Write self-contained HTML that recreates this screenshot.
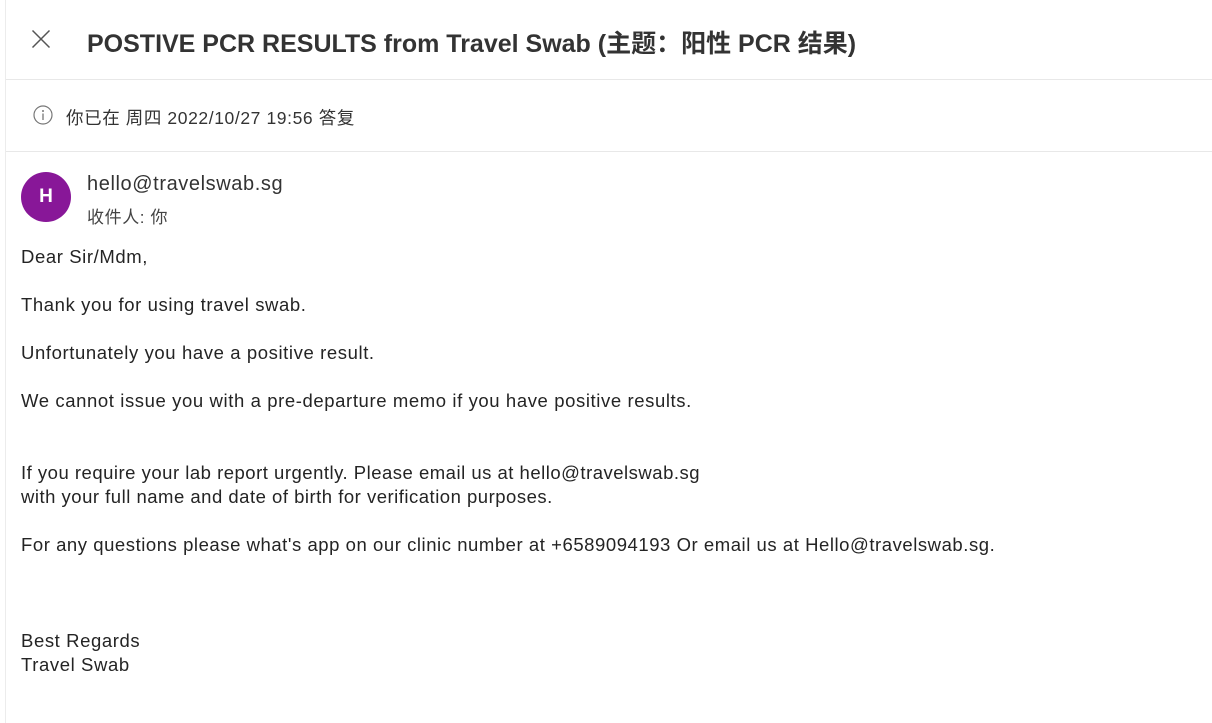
<!DOCTYPE html>
<html><head><meta charset="utf-8"><style>
body{margin:0;width:1212px;height:723px;background:#fff;position:relative;overflow:hidden;font-family:"Liberation Sans","Noto Sans CJK SC",sans-serif;color:#242424}
.vl{position:absolute;left:5px;top:0;width:1px;height:723px;background:#ececec}
.hl{position:absolute;left:6px;right:0;height:1px;background:#e8e8e8}
.t{position:absolute;white-space:nowrap}
.b{font-size:18.5px;line-height:24px;letter-spacing:0.6px}
</style></head><body>
<div class="vl"></div>
<svg class="t" style="left:31px;top:29px" width="20" height="20" viewBox="0 0 20 20"><path d="M1.5 1.5L18.5 18.5M18.5 1.5L1.5 18.5" stroke="#555" stroke-width="1.5" fill="none"/></svg>
<div class="t" style="left:87px;top:24px;font-size:25px;font-weight:bold;color:#333">POSTIVE PCR RESULTS from Travel Swab (主题：阳性 PCR 结果)</div>
<div class="hl" style="top:79px"></div>
<svg class="t" style="left:33px;top:105px" width="20" height="20" viewBox="0 0 20 20"><circle cx="10" cy="10" r="9" stroke="#777" stroke-width="1.2" fill="none"/><circle cx="10" cy="6" r="1" fill="#777"/><path d="M10 8.5V15" stroke="#777" stroke-width="1.3"/></svg>
<div class="t" style="left:66px;top:105px;font-size:17.5px;color:#333;letter-spacing:0.6px">你已在 周四 2022/10/27 19:56 答复</div>
<div class="hl" style="top:151px"></div>
<div class="t" style="left:21px;top:172px;width:50px;height:50px;border-radius:50%;background:#881798;color:#fff;font-weight:bold;font-size:19px;line-height:50px;text-align:center">H</div>
<div class="t" style="left:87px;top:173px;font-size:20px;color:#333;letter-spacing:0.6px">hello@travelswab.sg</div>
<div class="t" style="left:87px;top:203px;font-size:17px;color:#444;letter-spacing:0.6px">收件人: 你</div>
<div class="t b" style="left:21px;top:245px">Dear Sir/Mdm,</div>
<div class="t b" style="left:21px;top:293px">Thank you for using travel swab.</div>
<div class="t b" style="left:21px;top:341px">Unfortunately you have a positive result.</div>
<div class="t b" style="left:21px;top:389px">We cannot issue you with a pre-departure memo if you have positive results.</div>
<div class="t b" style="left:21px;top:461px;letter-spacing:0.5px">If you require your lab report urgently. Please email us at hello@travelswab.sg<br>with your full name and date of birth for verification purposes.</div>
<div class="t b" style="left:21px;top:533px;letter-spacing:0.55px">For any questions please what's app on our clinic number at +6589094193 Or email us at Hello@travelswab.sg.</div>
<div class="t b" style="left:21px;top:629px">Best Regards<br>Travel Swab</div>
</body></html>
